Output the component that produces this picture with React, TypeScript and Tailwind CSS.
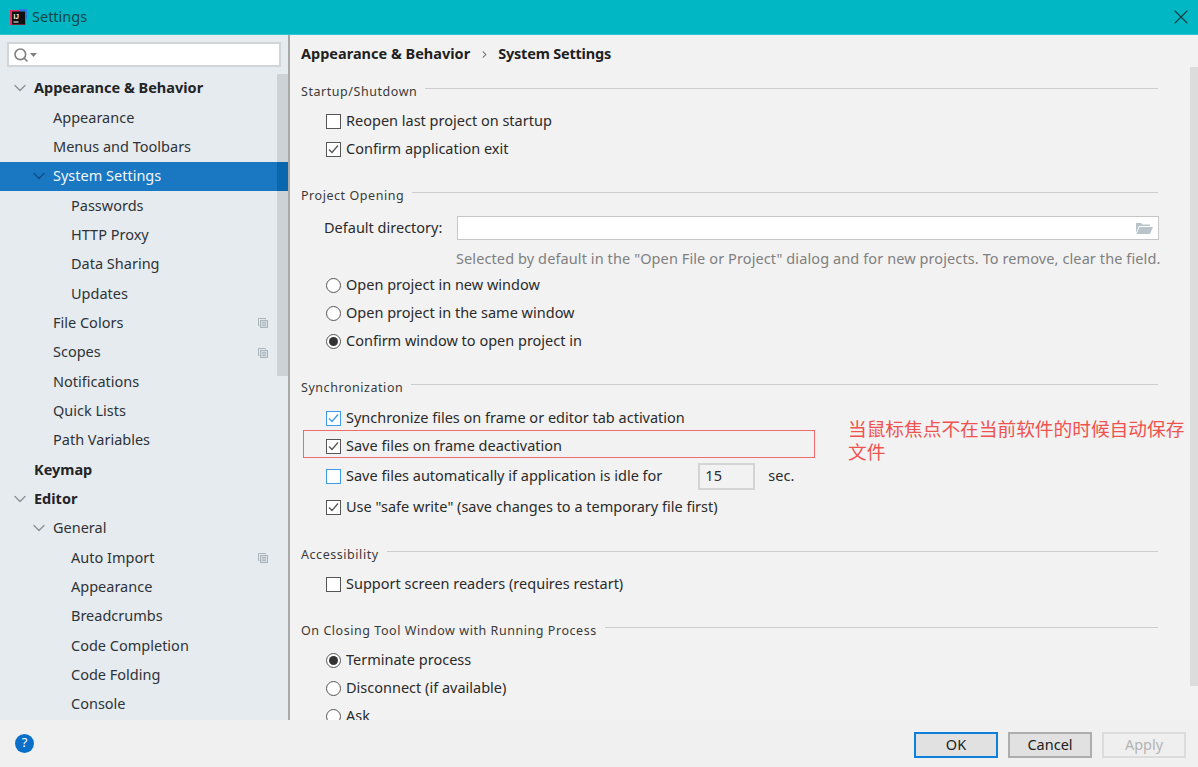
import { ChevronDown, ChevronRight, Search, X } from 'lucide-react'

const font = "font-['Noto_Sans','Noto_Sans_CJK_SC',sans-serif]"

type TreeRow = { label: string; level: number; bold?: boolean; open?: boolean; selected?: boolean; copy?: boolean }

const tree: TreeRow[] = [
  { label: 'Appearance & Behavior', level: 0, bold: true, open: true },
  { label: 'Appearance', level: 1 },
  { label: 'Menus and Toolbars', level: 1 },
  { label: 'System Settings', level: 1, open: true, selected: true },
  { label: 'Passwords', level: 2 },
  { label: 'HTTP Proxy', level: 2 },
  { label: 'Data Sharing', level: 2 },
  { label: 'Updates', level: 2 },
  { label: 'File Colors', level: 1, copy: true },
  { label: 'Scopes', level: 1, copy: true },
  { label: 'Notifications', level: 1 },
  { label: 'Quick Lists', level: 1 },
  { label: 'Path Variables', level: 1 },
  { label: 'Keymap', level: 0, bold: true },
  { label: 'Editor', level: 0, bold: true, open: true },
  { label: 'General', level: 1, open: true },
  { label: 'Auto Import', level: 2, copy: true },
  { label: 'Appearance', level: 2 },
  { label: 'Breadcrumbs', level: 2 },
  { label: 'Code Completion', level: 2 },
  { label: 'Code Folding', level: 2 },
  { label: 'Console', level: 2 },
]

function CopyIcon() {
  return (
    <svg width="12" height="12" viewBox="0 0 12 12" className="absolute left-[257px] top-[9px]" fill="none" stroke="#a9b4bb">
      <path d="M8.5 2.5v-1h-7v7h1" />
      <rect x="3.5" y="3.5" width="7" height="7" fill="#d5dbe0" />
      <path d="M5 5.5h4M5 7h4M5 8.5h4" strokeWidth="0.8" />
    </svg>
  )
}

function TreeItem({ row }: { row: TreeRow }) {
  const textLeft = row.level === 0 ? 'pl-[34px]' : row.level === 1 ? 'pl-[53px]' : 'pl-[71px]'
  const chevronLeft = row.level === 0 ? 'left-[10px]' : 'left-[29px]'
  return (
    <div
      className={`relative h-[29.33px] flex items-center text-[14.5px] ${textLeft} ${
        row.selected ? 'bg-[#1a78c2] text-[#f2f6fa]' : 'text-[#2f3337]'
      } ${row.bold ? 'font-bold text-[#222426]' : ''}`}
    >
      {row.open && (
        <ChevronDown
          size={20}
          strokeWidth={1.6}
          className={`absolute top-[4.6px] ${chevronLeft} ${row.selected ? 'text-[#0d4f86]' : 'text-[#8a9298]'}`}
        />
      )}
      {row.label}
      {row.copy && <CopyIcon />}
    </div>
  )
}

function SectionTitle({ label, className }: { label: string; className: string }) {
  return (
    <div className={`flex items-center h-[20px] pr-[40px] ${className}`}>
      <span className="text-[12.5px] tracking-[0.55px] text-[#3a3a3a] whitespace-nowrap mr-[8px]">{label}</span>
      <div className="flex-1 h-px bg-[#cdcdcd] -mt-[8px]" />
    </div>
  )
}

function Check({ label, checked, focus, className = '' }: { label: string; checked?: boolean; focus?: boolean; className?: string }) {
  return (
    <div className={`flex items-center h-[28px] pl-[25px] text-[14.5px] text-[#2b2b2b] whitespace-nowrap ${className}`}>
      <span
        className={`w-[15px] h-[15px] border bg-white mr-[5px] flex items-center justify-center shrink-0 ${
          focus ? 'border-[#3d9be9]' : 'border-[#555555]'
        }`}
      >
        {checked && (
          <svg width="11" height="11" viewBox="0 0 11 11" fill="none" stroke={focus ? '#3d9be9' : '#555555'} strokeWidth="1.3">
            <path d="M1 5.5l3 3 6-7" />
          </svg>
        )}
      </span>
      {label}
    </div>
  )
}

function Radio({ label, checked }: { label: string; checked?: boolean }) {
  return (
    <div className="flex items-center h-[28px] pl-[25px] text-[14.5px] text-[#2b2b2b] whitespace-nowrap">
      <span className="w-[15px] h-[15px] rounded-full border border-[#555555] bg-white mr-[5px] flex items-center justify-center shrink-0">
        {checked && <span className="w-[9px] h-[9px] rounded-full bg-[#333333]" />}
      </span>
      {label}
    </div>
  )
}

function FooterButton({ label, kind }: { label: string; kind: 'ok' | 'cancel' | 'off' }) {
  const look =
    kind === 'ok'
      ? 'border-2 border-[#0f7fdc] bg-[#e1e1e1] text-[#222222]'
      : kind === 'cancel'
        ? 'border-2 border-[#adadad] bg-[#e1e1e1] text-[#222222]'
        : 'border-2 border-[#dcdcdc] bg-[#efefef] text-[#b4b4b4]'
  return <div className={`w-[84px] h-[26px] flex items-center justify-center text-[14.5px] ${look}`}>{label}</div>
}

export default function App() {
  return (
    <div className={`w-[1198px] h-[767px] overflow-hidden flex flex-col bg-[#f2f2f2] ${font}`}>
      {/* title bar */}
      <div className="h-[35px] shrink-0 bg-[#00b7c3] border-b border-[#33c5cf] flex items-center pl-[10px] pr-[5px]">
        <svg width="17" height="17" viewBox="0 0 17 17" className="mr-[5px]">
          <rect x="0" y="1" width="16" height="15" fill="#e8305c" />
          <rect x="9" y="0" width="8" height="10" fill="#2a7be0" />
          <rect x="2" y="2.5" width="13" height="13" fill="#111111" />
          <text x="3.5" y="9.5" fontSize="6.5" fontWeight="700" fill="#ffffff" fontFamily="Liberation Sans">IJ</text>
          <rect x="3.5" y="12.5" width="5" height="1" fill="#ffffff" />
        </svg>
        <span className="text-[14.5px] text-[#14464b]">Settings</span>
        <X size={24} strokeWidth={1.1} className="ml-auto text-[#123c40]" />
      </div>

      <div className="relative h-[685px] shrink-0 flex">
        {/* sidebar */}
        <div className="relative w-[290px] shrink-0 bg-[#e6ebf0] border-r-2 border-[#a8a8a8] overflow-hidden">
          <div className="mx-[7px] mt-[7px] h-[25px] w-[274px] bg-white border-2 border-[#d2d5d8] flex items-center pl-[4px]">
            <Search size={16} strokeWidth={2.4} className="text-[#808080]" />
            <svg width="7" height="4" viewBox="0 0 7 4" className="ml-px">
              <path d="M0 0h7L3.5 4z" fill="#808080" />
            </svg>
          </div>
          <div className="mt-[6.7px]">
            {tree.map((row, i) => (
              <TreeItem key={i} row={row} />
            ))}
          </div>
          {/* tree scrollbar sits over the rows */}
          <div className="absolute left-[277px] top-[39px] w-[11px] h-[302px] bg-[#ccd2d6]" />
          <div className="absolute left-[277px] top-[127px] w-[11px] h-[29px] bg-[#0a66ad]" />
        </div>

        {/* settings panel */}
        <div className="relative flex-1 overflow-hidden pl-[11px]">
          <div className="h-[40px] pb-[2px] flex items-center text-[14.5px] font-bold text-[#1f1f1f]">
            Appearance &amp; Behavior
            <ChevronRight size={11} strokeWidth={2.2} className="ml-[9px] mr-[8px] text-[#555555]" />
            <span className="tracking-[-0.2px]">System Settings</span>
          </div>

          <SectionTitle label="Startup/Shutdown" className="mt-[7px]" />
          <Check label="Reopen last project on startup" className="mt-[5px]" />
          <Check label="Confirm application exit" checked />

          <SectionTitle label="Project Opening" className="mt-[23px]" />
          <div className="flex items-center h-[24px] mt-[10px] pl-[23px]">
            <span className="w-[133px] text-[14.5px] text-[#2b2b2b] whitespace-nowrap">Default directory:</span>
            <div className="w-[702px] h-[24px] bg-white border border-[#c6c6c6] flex items-center justify-end pr-[5px]">
              <svg width="18" height="14" viewBox="0 0 18 14" fill="#b9c4ca">
                <path d="M1 2h5l1.5 1.5H15V5H4L1 12z" />
                <path d="M4.5 6H18l-3 7H1.5z" />
              </svg>
            </div>
          </div>
          <div className="h-[24px] mt-[7px] pl-[155px] flex items-center text-[14.5px] tracking-[0.1px] text-[#808080] whitespace-nowrap">
            Selected by default in the "Open File or Project" dialog and for new projects. To remove, clear the field.
          </div>
          <div>
            <Radio label="Open project in new window" />
            <Radio label="Open project in the same window" />
            <Radio label="Confirm window to open project in" checked />
          </div>

          <SectionTitle label="Synchronization" className="mt-[23px]" />
          <Check label="Synchronize files on frame or editor tab activation" checked focus className="mt-[6px]" />
          <Check label="Save files on frame deactivation" checked />
          <div className="flex items-center h-[32px]">
            <Check label="Save files automatically if application is idle for" focus />
            <div className="ml-[36px] w-[57px] h-[27px] border-2 border-[#d4d4d4] bg-[#f2f2f2] pl-[5px] flex items-center text-[14.5px] text-[#2b2b2b]">
              15
            </div>
            <span className="ml-[13px] text-[14.5px] text-[#2b2b2b]">sec.</span>
          </div>
          <Check label='Use "safe write" (save changes to a temporary file first)' checked className="mt-[1px]" />

          <SectionTitle label="Accessibility" className="mt-[24px]" />
          <Check label="Support screen readers (requires restart)" className="mt-[5px]" />

          <SectionTitle label="On Closing Tool Window with Running Process" className="mt-[23px]" />
          <div className="mt-[5px]">
            <Radio label="Terminate process" checked />
            <Radio label="Disconnect (if available)" />
            <Radio label="Ask" />
          </div>

          {/* annotation drawn over the dialog */}
          <div className="absolute left-[13px] top-[395px] w-[512px] h-[28px] border border-[#f0696b]" />
          <div className="absolute left-[558px] top-[382px] w-[340px] text-[18.7px] leading-[23px] text-[#f0524f]">
            当鼠标焦点不在当前软件的时候自动保存文件
          </div>
          <div className="absolute left-[900px] top-[32px] w-[8px] h-[619px] bg-[#dcdcdc]" />
        </div>
      </div>

      {/* footer */}
      <div className="h-[47px] shrink-0 bg-[#f0f0f0] flex items-center pl-[15px] pr-[12px]">
        <div className="w-[19px] h-[19px] rounded-full bg-[#0a6fc9] flex items-center justify-center text-[13px] text-white -mt-px">?</div>
        <div className="ml-auto flex gap-[10px] mt-[3px]">
          <FooterButton label="OK" kind="ok" />
          <FooterButton label="Cancel" kind="cancel" />
          <FooterButton label="Apply" kind="off" />
        </div>
      </div>
    </div>
  )
}
